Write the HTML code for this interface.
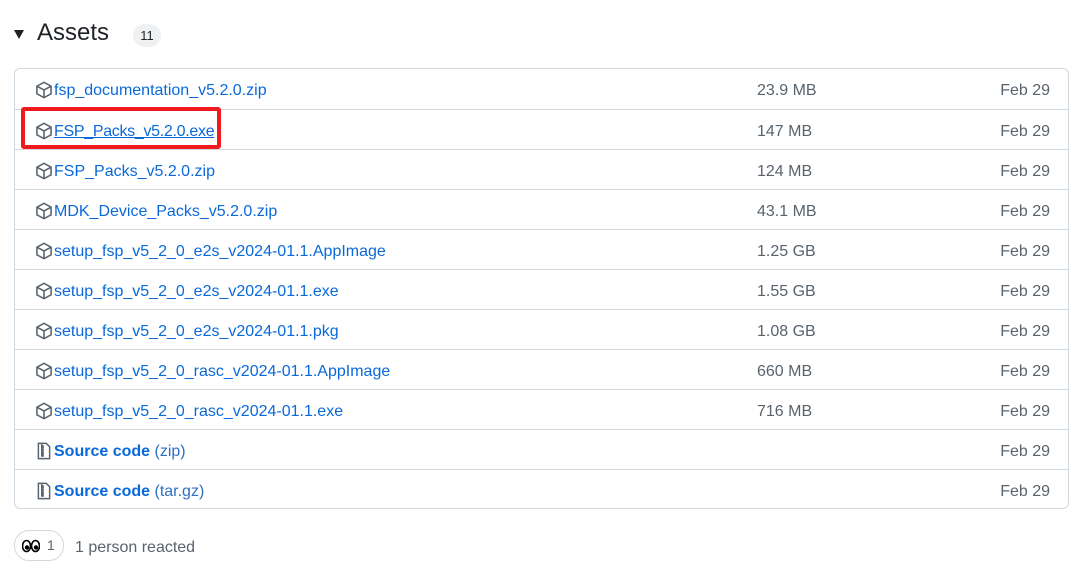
<!DOCTYPE html>
<html><head><style>
body{margin:0;width:1080px;height:573px;background:#fff;font-family:"Liberation Sans",sans-serif;position:relative;overflow:hidden}
.h{position:absolute;left:37px;top:19px;font-size:24px;color:#1f2328}
.tri{position:absolute;left:14px;top:30px;width:0;height:0;border-left:5.5px solid transparent;border-right:5.5px solid transparent;border-top:9px solid #1f2328}
.badge{position:absolute;left:133px;top:24px;width:28px;height:23px;border-radius:12px;background:#eff1f3;font-size:13px;color:#1f2328;text-align:center;line-height:23px}
.box{position:absolute;left:14px;top:68px;width:1053px;height:439px;border:1px solid #d1d9e0;border-radius:6px}
.row{position:absolute;left:0;width:1053px;height:40px;border-top:1px solid #d1d9e0;font-size:16px;line-height:44px}
.row:first-child{border-top:none}
.ic{position:absolute;left:20px;top:12px}
.n{position:absolute;left:39px;color:#0969da}
.n span{color:#2f6fc4}
.s{position:absolute;left:742px;color:#59636e}
.d{position:absolute;right:18px;color:#59636e}
.red{position:absolute;left:21px;top:107px;width:192px;height:34px;border:4px solid #f0191d;border-radius:3px}
.react{position:absolute;left:14px;top:530px;width:48px;height:29px;border:1px solid #d1d9e0;border-radius:15px}
.rt{position:absolute;left:75px;top:539px;font-size:16px;color:#59636e}
</style></head><body>
<div class="tri"></div><div class="h">Assets</div><div class="badge">11</div>
<div class="box">
<div class="row" style="top:0"><svg class="ic" width="18" height="18" viewBox="0 0 16 16"><path fill="none" stroke="#59636e" stroke-width="1.4" d="M8 1.2 14.3 4.6v6.8L8 14.8 1.7 11.4V4.6zM1.9 4.7 8 8l6.1-3.3M8 8v6.6"/></svg><span class="n">fsp_documentation_v5.2.0.zip</span><span class="s">23.9 MB</span><span class="d">Feb 29</span></div>
<div class="row" style="top:40px"><svg class="ic" width="18" height="18" viewBox="0 0 16 16"><path fill="none" stroke="#59636e" stroke-width="1.4" d="M8 1.2 14.3 4.6v6.8L8 14.8 1.7 11.4V4.6zM1.9 4.7 8 8l6.1-3.3M8 8v6.6"/></svg><span class="n" style="text-decoration:underline;letter-spacing:-0.3px">FSP_Packs_v5.2.0.exe</span><span class="s">147 MB</span><span class="d">Feb 29</span></div>
<div class="row" style="top:80px"><svg class="ic" width="18" height="18" viewBox="0 0 16 16"><path fill="none" stroke="#59636e" stroke-width="1.4" d="M8 1.2 14.3 4.6v6.8L8 14.8 1.7 11.4V4.6zM1.9 4.7 8 8l6.1-3.3M8 8v6.6"/></svg><span class="n">FSP_Packs_v5.2.0.zip</span><span class="s">124 MB</span><span class="d">Feb 29</span></div>
<div class="row" style="top:120px"><svg class="ic" width="18" height="18" viewBox="0 0 16 16"><path fill="none" stroke="#59636e" stroke-width="1.4" d="M8 1.2 14.3 4.6v6.8L8 14.8 1.7 11.4V4.6zM1.9 4.7 8 8l6.1-3.3M8 8v6.6"/></svg><span class="n">MDK_Device_Packs_v5.2.0.zip</span><span class="s">43.1 MB</span><span class="d">Feb 29</span></div>
<div class="row" style="top:160px"><svg class="ic" width="18" height="18" viewBox="0 0 16 16"><path fill="none" stroke="#59636e" stroke-width="1.4" d="M8 1.2 14.3 4.6v6.8L8 14.8 1.7 11.4V4.6zM1.9 4.7 8 8l6.1-3.3M8 8v6.6"/></svg><span class="n">setup_fsp_v5_2_0_e2s_v2024-01.1.AppImage</span><span class="s">1.25 GB</span><span class="d">Feb 29</span></div>
<div class="row" style="top:200px"><svg class="ic" width="18" height="18" viewBox="0 0 16 16"><path fill="none" stroke="#59636e" stroke-width="1.4" d="M8 1.2 14.3 4.6v6.8L8 14.8 1.7 11.4V4.6zM1.9 4.7 8 8l6.1-3.3M8 8v6.6"/></svg><span class="n">setup_fsp_v5_2_0_e2s_v2024-01.1.exe</span><span class="s">1.55 GB</span><span class="d">Feb 29</span></div>
<div class="row" style="top:240px"><svg class="ic" width="18" height="18" viewBox="0 0 16 16"><path fill="none" stroke="#59636e" stroke-width="1.4" d="M8 1.2 14.3 4.6v6.8L8 14.8 1.7 11.4V4.6zM1.9 4.7 8 8l6.1-3.3M8 8v6.6"/></svg><span class="n">setup_fsp_v5_2_0_e2s_v2024-01.1.pkg</span><span class="s">1.08 GB</span><span class="d">Feb 29</span></div>
<div class="row" style="top:280px"><svg class="ic" width="18" height="18" viewBox="0 0 16 16"><path fill="none" stroke="#59636e" stroke-width="1.4" d="M8 1.2 14.3 4.6v6.8L8 14.8 1.7 11.4V4.6zM1.9 4.7 8 8l6.1-3.3M8 8v6.6"/></svg><span class="n">setup_fsp_v5_2_0_rasc_v2024-01.1.AppImage</span><span class="s">660 MB</span><span class="d">Feb 29</span></div>
<div class="row" style="top:320px"><svg class="ic" width="18" height="18" viewBox="0 0 16 16"><path fill="none" stroke="#59636e" stroke-width="1.4" d="M8 1.2 14.3 4.6v6.8L8 14.8 1.7 11.4V4.6zM1.9 4.7 8 8l6.1-3.3M8 8v6.6"/></svg><span class="n">setup_fsp_v5_2_0_rasc_v2024-01.1.exe</span><span class="s">716 MB</span><span class="d">Feb 29</span></div>
<div class="row" style="top:360px"><svg class="ic" width="18" height="18" viewBox="0 0 16 16"><path fill="none" stroke="#59636e" stroke-width="1.3" d="M3 1.2h7l3 3v10.6H3zM6 2v1.5h1.2V5H6v1.5h1.2V8H6v1.5h1.2v3H6z"/></svg><span class="n"><b>Source code</b> <span>(zip)</span></span><span class="d">Feb 29</span></div>
<div class="row" style="top:400px"><svg class="ic" width="18" height="18" viewBox="0 0 16 16"><path fill="none" stroke="#59636e" stroke-width="1.3" d="M3 1.2h7l3 3v10.6H3zM6 2v1.5h1.2V5H6v1.5h1.2V8H6v1.5h1.2v3H6z"/></svg><span class="n"><b>Source code</b> <span>(tar.gz)</span></span><span class="d">Feb 29</span></div>
</div>
<div class="red"></div>
<div class="react"><svg style="position:absolute;left:7px;top:8px" width="18" height="14" viewBox="0 0 18 14"><ellipse cx="4.5" cy="7" rx="4" ry="5.5" fill="#fff" stroke="#000" stroke-width="1.6"/><ellipse cx="13.5" cy="7" rx="4" ry="5.5" fill="#fff" stroke="#000" stroke-width="1.6"/><circle cx="5" cy="8.5" r="2.2"/><circle cx="14" cy="8.5" r="2.2"/></svg><span style="position:absolute;left:32px;top:6px;font-size:14px;color:#59636e">1</span></div>
<div class="rt">1 person reacted</div>
</body></html>
